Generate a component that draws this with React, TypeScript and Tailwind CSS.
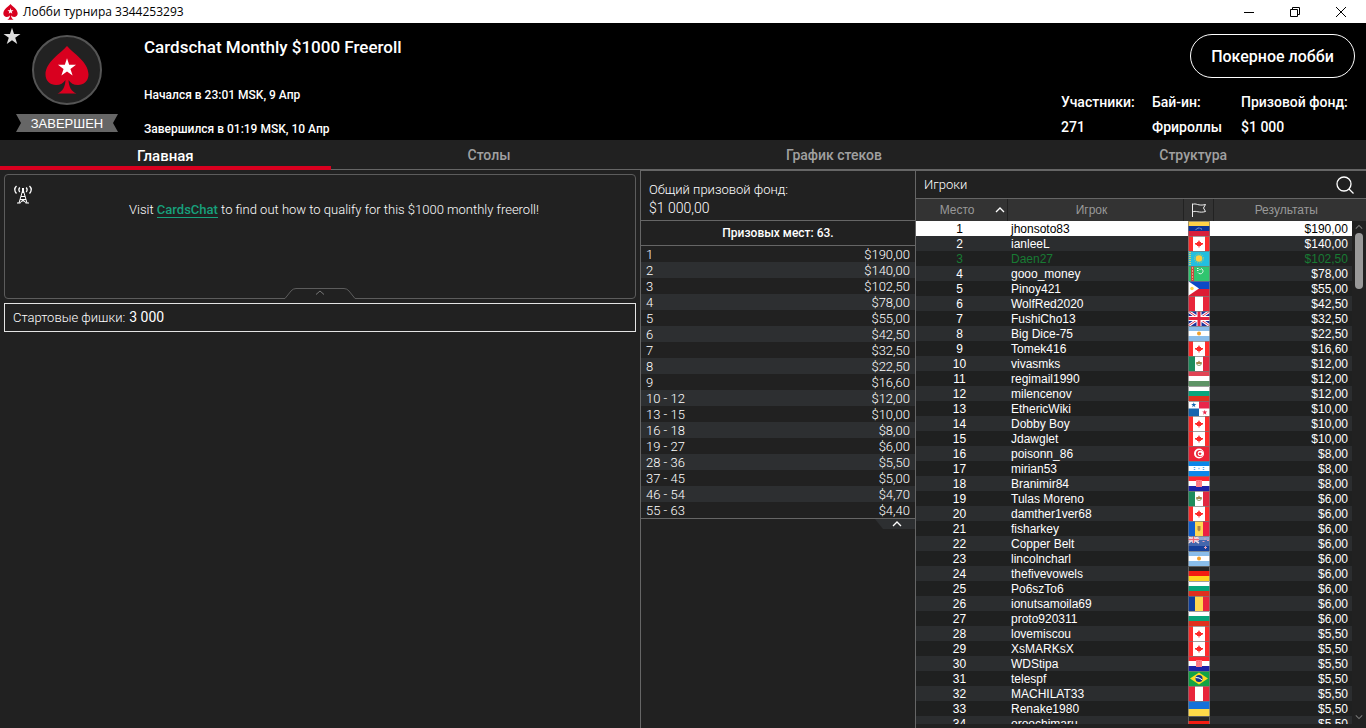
import React, { useState } from 'react';

interface Player {
  name: string;
  flag: string;
  prize: string;
}

const TABS = [
  { label: 'Главная', width: 'w-[24.2%]' },
  { label: 'Столы', width: 'w-[23.2%]' },
  { label: 'График стеков', width: 'w-[27.3%]' },
  { label: 'Структура', width: 'w-[25.3%]' },
];

const PAYOUTS = [
  ['1', '$190,00'],
  ['2', '$140,00'],
  ['3', '$102,50'],
  ['4', '$78,00'],
  ['5', '$55,00'],
  ['6', '$42,50'],
  ['7', '$32,50'],
  ['8', '$22,50'],
  ['9', '$16,60'],
  ['10 - 12', '$12,00'],
  ['13 - 15', '$10,00'],
  ['16 - 18', '$8,00'],
  ['19 - 27', '$6,00'],
  ['28 - 36', '$5,50'],
  ['37 - 45', '$5,00'],
  ['46 - 54', '$4,70'],
  ['55 - 63', '$4,40'],
];

const PLAYERS: Player[] = [
  { name: 'jhonsoto83', flag: 've', prize: '$190,00' },
  { name: 'ianleeL', flag: 'ca', prize: '$140,00' },
  { name: 'Daen27', flag: 'kz', prize: '$102,50' },
  { name: 'gooo_money', flag: 'tm', prize: '$78,00' },
  { name: 'Pinoy421', flag: 'ph', prize: '$55,00' },
  { name: 'WolfRed2020', flag: 'pe', prize: '$42,50' },
  { name: 'FushiCho13', flag: 'gb', prize: '$32,50' },
  { name: 'Big Dice-75', flag: 'ar', prize: '$22,50' },
  { name: 'Tomek416', flag: 'ca', prize: '$16,60' },
  { name: 'vivasmks', flag: 'mx', prize: '$12,00' },
  { name: 'regimail1990', flag: 'hu', prize: '$12,00' },
  { name: 'milencenov', flag: 'bg', prize: '$12,00' },
  { name: 'EthericWiki', flag: 'pa', prize: '$10,00' },
  { name: 'Dobby Boy', flag: 'ca', prize: '$10,00' },
  { name: 'Jdawglet', flag: 'ca', prize: '$10,00' },
  { name: 'poisonn_86', flag: 'tn', prize: '$8,00' },
  { name: 'mirian53', flag: 'hn', prize: '$8,00' },
  { name: 'Branimir84', flag: 'hr', prize: '$8,00' },
  { name: 'Tulas Moreno', flag: 'mx', prize: '$6,00' },
  { name: 'damther1ver68', flag: 'ca', prize: '$6,00' },
  { name: 'fisharkey', flag: 'md', prize: '$6,00' },
  { name: 'Copper Belt', flag: 'nz', prize: '$6,00' },
  { name: 'lincolncharl', flag: 'ar', prize: '$6,00' },
  { name: 'thefivevowels', flag: 'de', prize: '$6,00' },
  { name: 'Po6szTo6', flag: 'bg', prize: '$6,00' },
  { name: 'ionutsamoila69', flag: 'ro', prize: '$6,00' },
  { name: 'proto920311', flag: 'bg', prize: '$6,00' },
  { name: 'lovemiscou', flag: 'ca', prize: '$5,50' },
  { name: 'XsMARKsX', flag: 'ca', prize: '$5,50' },
  { name: 'WDStipa', flag: 'hr', prize: '$5,50' },
  { name: 'telespf', flag: 'br', prize: '$5,50' },
  { name: 'MACHILAT33', flag: 'pe', prize: '$5,50' },
  { name: 'Renake1980', flag: 'ua', prize: '$5,50' },
  { name: 'oroochimaru', flag: 'de', prize: '$5,50' },
];

const STAR = 'M12 1l2.7 8.2h8.6l-7 5.1 2.7 8.3-7-5.1-7 5.1 2.7-8.3-7-5.1h8.6z';

/* stripes: h = top to bottom, v = left to right */
const h = (a: string, b: string, c: string) => (
  <>
    <path fill={a} d="M0 0h22v5H0z" />
    <path fill={b} d="M0 5h22v5H0z" />
    <path fill={c} d="M0 10h22v5H0z" />
  </>
);

const v = (a: string, b: string, c: string) => (
  <>
    <path fill={a} d="M0 0h7v15H0z" />
    <path fill={b} d="M7 0h8v15H7z" />
    <path fill={c} d="M15 0h7v15h-7z" />
  </>
);

const FLAGS: Record<string, React.ReactNode> = {
  ve: (
    <>
      {h('#ffd147', '#0a3296', '#d8203c')}
      <path d="M7.5 9q3.500-4 7 0" fill="none" stroke="#b9c6e8" strokeDasharray="1 .6" />
    </>
  ),
  ca: (
    <>
      <path fill="#fff" d="M0 0h22v15H0z" />
      <path fill="#ff2d2d" d="M0 0h5v15H0zM17 0h5v15h-5z" />
      <path fill="#ff2d2d" d="M11 4l1 2h1v1h2v1l-1 1h-1v1h-1.500v1.500h-1V10H9V9H8L7 8V7h2V6h1z" />
    </>
  ),
  kz: (
    <>
      <path fill="#22bfe0" d="M0 0h22v15H0z" />
      <path d="M2 1v13" stroke="#d5cf62" strokeWidth="2" strokeDasharray="1 1" />
      <circle cx="11" cy="7.500" r="4.500" fill="none" stroke="#bfc96a" strokeDasharray="1 1" />
      <circle cx="11" cy="7.500" r="3.300" fill="#ffcd3c" />
    </>
  ),
  tm: (
    <>
      <path fill="#30c56f" d="M0 0h22v15H0z" />
      <path fill="#c8493f" d="M3 0h3v15H3z" />
      <path d="M4.500 1v13" stroke="#e9a184" strokeDasharray="2 1" />
      <path d="M13 2.500a2.700 2.700 0 1 1-3 4" fill="none" stroke="#e4f6ea" />
      <path d="M9 2.500h1.500M9 4.500h1.500M11.500 3.500h1" stroke="#e4f6ea" />
    </>
  ),
  ph: (
    <>
      <path fill="#0b49c6" d="M0 0h22v8H0z" />
      <path fill="#dd1b33" d="M0 8h22v7H0z" />
      <path fill="#fff" d="M0 0l11 7.500L0 15z" />
      <circle cx="4" cy="7.500" r="1.700" fill="#ffd54a" />
    </>
  ),
  pe: v('#e8253b', '#fff', '#e8253b'),
  gb: (
    <>
      <path fill="#1b2f9c" d="M0 0h22v15H0z" />
      <path d="M0 0l22 15M22 0L0 15" stroke="#fff" strokeWidth="3" />
      <path d="M0 0l22 15M22 0L0 15" stroke="#e0354f" />
      <path d="M11 0v15M0 7.500h22" stroke="#fff" strokeWidth="5" />
      <path d="M11 0v15M0 7.500h22" stroke="#e5243f" strokeWidth="3" />
    </>
  ),
  ar: (
    <>
      {h('#8abdea', '#fff', '#8abdea')}
      <circle cx="11" cy="7.500" r="2" fill="#f0a02c" />
    </>
  ),
  mx: (
    <>
      {v('#1d8c5c', '#fff', '#e2283f')}
      <path d="M8.500 7a2.500 2.500 0 0 0 5 0" fill="none" stroke="#8aa070" />
      <path fill="#a8884d" d="M11 4.500l1 1.500h2l-1 2h-4L8 6h2z" />
    </>
  ),
  hu: h('#e14354', '#fff', '#5e9366'),
  bg: h('#fff', '#08a57c', '#e0301e'),
  pa: (
    <>
      <path fill="#fff" d="M0 0h22v15H0z" />
      <path fill="#e9264a" d="M11 0h11v7.500H11z" />
      <path fill="#1566b0" d="M0 7.500h11V15H0z" />
      <path fill="#1566b0" d={STAR} transform="translate(3 1) scale(.23)" />
      <path fill="#e9264a" d={STAR} transform="translate(14 8.500) scale(.23)" />
    </>
  ),
  tn: (
    <>
      <path fill="#ec2236" d="M0 0h22v15H0z" />
      <circle cx="11" cy="7.500" r="5" fill="#fff" />
      <circle cx="11.500" cy="7.500" r="3.500" fill="#ec2236" />
      <circle cx="12.500" cy="7.500" r="2.800" fill="#fff" />
      <path fill="#ec2236" d={STAR} transform="translate(10 5.500) scale(.17)" />
    </>
  ),
  hn: (
    <>
      {h('#0b86e8', '#fff', '#0b86e8')}
      <path d="M6.500 6v1M6.500 8v1M15.500 6v1M15.500 8v1M10.500 7.500h1" stroke="#4ea5ee" strokeWidth="1.500" />
    </>
  ),
  hr: (
    <>
      {h('#ff2631', '#fff', '#1c22a8')}
      <path fill="#ff8088" d="M8 4h6v7H8z" />
      <path d="M9 5.500h4M9 8h4" stroke="#ff6a74" strokeDasharray="1 1" />
    </>
  ),
  md: (
    <>
      {v('#1160cf', '#ffd850', '#ec2043')}
      <path fill="#ac8545" d="M9.500 5h3v4l-1.500 1.500L9.500 9z" />
    </>
  ),
  nz: (
    <>
      <path fill="#4467ad" d="M0 0h22v15H0z" />
      <path fill="#16409a" d="M0 10h22v5H0z" />
      <path fill="#8fa6d3" d="M0 0h22v4H0z" />
      <path d="M0 0l11 7M11 0L0 7" stroke="#eedde4" strokeWidth="1.500" />
      <path d="M5.500 0v7M0 3.500h11" stroke="#fff" strokeWidth="2.500" />
      <path d="M5.500 0v7M0 3.500h11" stroke="#ee6675" strokeWidth="1.400" />
      <path d="M17 2v2M14.500 5.500h2M19 4.500h2M17.500 10v3M16 11.500h3" stroke="#e0a0b4" />
    </>
  ),
  de: h('#262626', '#f31c12', '#ffd21c'),
  ro: v('#0f3f9c', '#ffd850', '#e9253c'),
  br: (
    <>
      <path fill="#12a345" d="M0 0h22v15H0z" />
      <path fill="#ffdc1f" d="M11 1.500L20 7.500l-9 6-9-6z" />
      <circle cx="11" cy="7.500" r="3.500" fill="#14368c" />
      <path d="M7.700 6.500q3.500-.3 6.400 2.300" fill="none" stroke="#fff" />
    </>
  ),
  ua: (
    <>
      <path fill="#1571d8" d="M0 0h22v8H0z" />
      <path fill="#ffda48" d="M0 8h22v7H0z" />
    </>
  ),
};

function Flag({ code }: { code: string }) {
  return (
    <svg viewBox="0 0 22 15" className="block mx-auto w-[22px] h-[15px]" aria-label={code}>
      {FLAGS[code]}
      <path d="M.5 15V.5h21V15" fill="none" stroke="#777" strokeOpacity=".7" />
    </svg>
  );
}

function Spade({ className }: { className: string }) {
  return (
    <svg viewBox="0 0 44 48" className={className} aria-hidden="true">
      <path
        fill="#d9001f"
        d="M22 0C28 7 43.500 16 43.500 28.500 43.500 35 38.500 39 33 39c-4.500 0-7.500-2-9.500-5 .3 7 3 11.500 8 13.500h-19c5-2 7.700-6.500 8-13.500-2 3-5 5-9.500 5C5.500 39 .5 35 .5 28.500.5 16 16 7 22 0z"
      />
      <path fill="#fff" d={STAR} transform="translate(12.400 11.500) scale(.8)" />
    </svg>
  );
}

function Chevron({ className, down }: { className: string; down?: boolean }) {
  return (
    <svg viewBox="0 0 10 6" className={className} fill="none" stroke="currentColor" aria-hidden="true">
      <path d={down ? 'M1 1l4 4 4-4' : 'M1 5l4-4 4 4'} strokeWidth="1.300" />
    </svg>
  );
}

function TitleBar() {
  return (
    <div className="flex h-[23px] shrink-0 items-center bg-white text-black">
      <Spade className="ml-[3px] h-4 w-[15px]" />
      <span className="ml-[5px] font-['Open_Sans',sans-serif] text-[12px]">Лобби турнира 3344253293</span>
      <div className="ml-auto mr-[2px] flex">
        <button aria-label="Свернуть" className="flex h-[23px] w-[46px] items-center justify-center">
          <svg viewBox="0 0 10 10" className="h-[10px] w-[10px]"><path d="M0 5.500h10" stroke="#000" /></svg>
        </button>
        <button aria-label="Восстановить" className="flex h-[23px] w-[46px] items-center justify-center">
          <svg viewBox="0 0 10 10" className="h-[10px] w-[10px]" fill="none" stroke="#000">
            <path d="M.5 2.500h7v7h-7zM2.500 2.500v-2h7v7h-2" />
          </svg>
        </button>
        <button aria-label="Закрыть" className="flex h-[23px] w-[46px] items-center justify-center">
          <svg viewBox="0 0 10 10" className="h-[10px] w-[10px]" fill="none" stroke="#000">
            <path d="M0 0l10 10M10 0L0 10" />
          </svg>
        </button>
      </div>
    </div>
  );
}

function Header() {
  return (
    <header className="flex h-[117px] shrink-0 bg-black font-medium">
      <div className="relative flex w-[134px] flex-col items-center pt-3">
        <button aria-label="В избранное" className="absolute left-[3px] top-1">
          <svg viewBox="0 0 24 24" className="h-[18px] w-[18px]"><path fill="#ddd" d={STAR} /></svg>
        </button>
        <div className="flex h-[70px] w-[70px] items-center justify-center rounded-full border-2 border-[#555] bg-[#222]">
          <Spade className="h-12 w-11" />
        </div>
        <div className="mt-[9px] flex h-[18px] w-[102px] items-center justify-center bg-[#666] pt-0.5 font-['Liberation_Sans',Arial,sans-serif] text-[13px] font-normal [clip-path:polygon(0_0,100%_0,calc(100%-5px)_50%,100%_100%,0_100%,5px_50%)]">
          ЗАВЕРШЕН
        </div>
      </div>

      <div className="ml-[10px] pt-3 text-[12px] leading-5">
        <h1 className="text-[17px] leading-6">Cardschat Monthly $1000 Freeroll</h1>
        <p className="mt-[26px]">Начался в 23:01 MSK, 9 Апр</p>
        <p className="mt-[14px]">Завершился в 01:19 MSK, 10 Апр</p>
      </div>

      <div className="ml-auto flex flex-col items-end pt-[11px]">
        <button className="mr-[11px] h-11 w-[165px] rounded-full border border-white pt-px text-[16px]">
          Покерное лобби
        </button>
        <dl className="mr-[18px] mt-3 grid grid-cols-[91px_89px_107px] whitespace-nowrap text-[14px] leading-[25px]">
          <div>
            <dt>Участники:</dt>
            <dd>271</dd>
          </div>
          <div>
            <dt>Бай-ин:</dt>
            <dd>Фрироллы</dd>
          </div>
          <div>
            <dt>Призовой фонд:</dt>
            <dd>$1 000</dd>
          </div>
        </dl>
      </div>
    </header>
  );
}

function InfoPanel() {
  return (
    <section className="flex-1 px-1 pt-1">
      <div className="relative h-[125px] rounded border border-[#5c5c5c]">
        <svg
          viewBox="0 0 18 19"
          className="absolute left-[9px] top-[10px] h-[19px] w-[18px]"
          fill="none"
          stroke="#fff"
          aria-hidden="true"
        >
          <path d="M2.500 1Q-1 4.500 2.500 8.500M15.500 1q3.500 3.500 0 7.500M5.800 2.500q-1.800 2.200 0 4.500M12.200 2.500q1.800 2.200 0 4.500" strokeWidth="1.300" />
          <path d="M8.500 6L5 18M9.500 6L13 18M7 11.500h4M6 14.500h6M3 18h3.500M11.500 18H15M6 17.500l5-3M12 17.500l-5-3" />
          <path d="M9 3v5" strokeWidth="2" />
        </svg>
        <p className="pl-7 pt-[25px] text-center text-[13px] font-light leading-5">
          Visit{' '}
          <a href="#cardschat" className="border-b border-[#17a07c] font-medium text-[#17a07c]">CardsChat</a>{' '}
          to find out how to qualify for this $1000 monthly freeroll!
        </p>
        <button
          aria-label="Свернуть сообщение"
          className="absolute -bottom-px left-1/2 h-[11px] w-[70px] -translate-x-1/2 bg-[#212121] text-[#777]"
        >
          <svg viewBox="0 0 70 11" className="h-[11px] w-[70px]" fill="none" stroke="#5c5c5c">
            <path d="M0 10.500L6 3Q8 .5 11 .5h48q3 0 5 2.500l6 7.500" />
            <path d="M31 6.500l4-3.500 4 3.500" stroke="#777" />
          </svg>
        </button>
      </div>
      <div className="mt-1 flex h-[29px] items-center border border-[#e4e4e4] px-2 text-[13px] font-light">
        Стартовые фишки:
        <span className="ml-1 text-[14px] font-normal">3 000</span>
      </div>
    </section>
  );
}

function PrizePanel() {
  return (
    <section className="w-[275px] border-l border-t border-[#666]">
      <div className="h-[50px] border-b border-[#666] px-2 pt-[10px] font-light">
        <p className="text-[13px] leading-[18px]">Общий призовой фонд:</p>
        <p className="text-[14px] leading-[18px]">$1 000,00</p>
      </div>
      <h2 className="h-[25px] border-b border-[#666] text-center text-[12px] font-medium leading-[25px]">
        Призовых мест: 63.
      </h2>
      <table className="w-full border-b border-[#666] text-[13px] font-light leading-[14px]">
        <tbody>
          {PAYOUTS.map(([place, prize]) => (
            <tr key={place} className="even:bg-[#2d2f31]">
              <td className="h-4 p-0 pl-[5px] pt-0.5">{place}</td>
              <td className="h-4 p-0 pr-[5px] pt-0.5 text-right">{prize}</td>
            </tr>
          ))}
        </tbody>
      </table>
      <button
        aria-label="Свернуть список призов"
        className="ml-auto flex h-[10px] w-10 items-center justify-center bg-[#2d2f31] [clip-path:polygon(0_0,100%_0,100%_100%,8px_100%)]"
      >
        <Chevron className="ml-1 h-[6px] w-[10px]" />
      </button>
    </section>
  );
}

function PlayersPanel() {
  const rowColor = (i: number) => {
    if (i === 0) return 'bg-white text-black';
    if (i === 2) return 'bg-[#1f2020] text-[#187a33]';
    return i % 2 ? 'bg-[#2b2d2f]' : 'bg-[#1f2020]';
  };

  return (
    <section className="flex w-[451px] flex-col border-l border-t border-[#666] pb-1">
      <div className="flex h-7 shrink-0 items-center border-b border-[#666] pl-2 pr-3 text-[13px]">
        <h2 className="font-light">Игроки</h2>
        <button aria-label="Поиск" className="ml-auto">
          <svg viewBox="0 0 18 18" className="h-[18px] w-[18px]" fill="none" stroke="#fff" strokeWidth="1.300">
            <circle cx="8" cy="8" r="7" />
            <path d="M13 13l4.500 4.500" />
          </svg>
        </button>
      </div>

      <div className="relative min-h-0 flex-1 overflow-hidden font-['Liberation_Sans',Arial,sans-serif] text-[12px]">
        <table className="w-full table-fixed">
          <colgroup>
            <col className="w-[91px]" />
            <col />
            <col className="w-[30px]" />
            <col className="w-[138px]" />
            <col className="w-[14px]" />
          </colgroup>
          <thead className="bg-[#333] text-[#999]">
            <tr>
              <th className="h-[22px] border-r border-[#222] p-0 font-normal">
                <div className="flex items-center justify-end pr-[2px]">
                  <span className="mr-5">Место</span>
                  <Chevron className="h-[6px] w-[10px] text-white" />
                </div>
              </th>
              <th className="border-r border-[#222] p-0 pr-2 font-normal">Игрок</th>
              <th className="border-r border-[#222] p-0" aria-label="Страна">
                <svg viewBox="0 0 14 14" className="mx-auto h-[14px] w-[14px]" fill="none" stroke="#eee">
                  <path d="M.5 14V.5M.5 1.500C4-.5 6 3.500 13.500 1.500L11.500 5l2 3.500C7 10.500 4 7 .5 9" />
                </svg>
              </th>
              <th colSpan={2} className="p-0 pr-2 font-normal">Результаты</th>
            </tr>
          </thead>
          <tbody>
            {PLAYERS.map((p, i) => (
              <tr key={p.name} className={`leading-[13px] ${rowColor(i)}`}>
                <td className="h-[15px] p-0 pr-1 pt-0.5 text-center">{i + 1}</td>
                <td className="p-0 pl-1 pt-0.5">{p.name}</td>
                <td className="p-0"><Flag code={p.flag} /></td>
                <td className="p-0 pr-1 pt-0.5 text-right">{p.prize}</td>
                <td className="bg-[#212121] p-0" />
              </tr>
            ))}
          </tbody>
        </table>

        <div className="absolute bottom-0 right-[3px] top-[25px] flex w-2 flex-col items-center text-[#777]">
          <Chevron className="h-[6px] w-2" />
          <div className="mt-[3px] h-14 w-2 rounded-full bg-[#999]" />
          <Chevron down className="mb-1 mt-auto h-[6px] w-2" />
        </div>
      </div>
    </section>
  );
}

export default function App() {
  const [active, setActive] = useState(0);

  return (
    <div className="flex h-screen flex-col overflow-hidden bg-[#212121] font-[Roboto,sans-serif] text-white">
      <TitleBar />
      <Header />
      <nav className="flex h-[30px] shrink-0 border-b border-[#666] font-medium">
        {TABS.map((tab, i) => (
          <button
            key={tab.label}
            onClick={() => setActive(i)}
            className={`${tab.width} -mb-px h-[30px] border-b-4 ${
              i === active
                ? 'border-[#d9001f] pt-[5px] text-[15px] text-white'
                : 'border-transparent pt-1 text-[14px] text-[#a0a0a0]'
            }`}
          >
            {tab.label}
          </button>
        ))}
      </nav>
      <main className="flex min-h-0 flex-1">
        <InfoPanel />
        <PrizePanel />
        <PlayersPanel />
      </main>
    </div>
  );
}
